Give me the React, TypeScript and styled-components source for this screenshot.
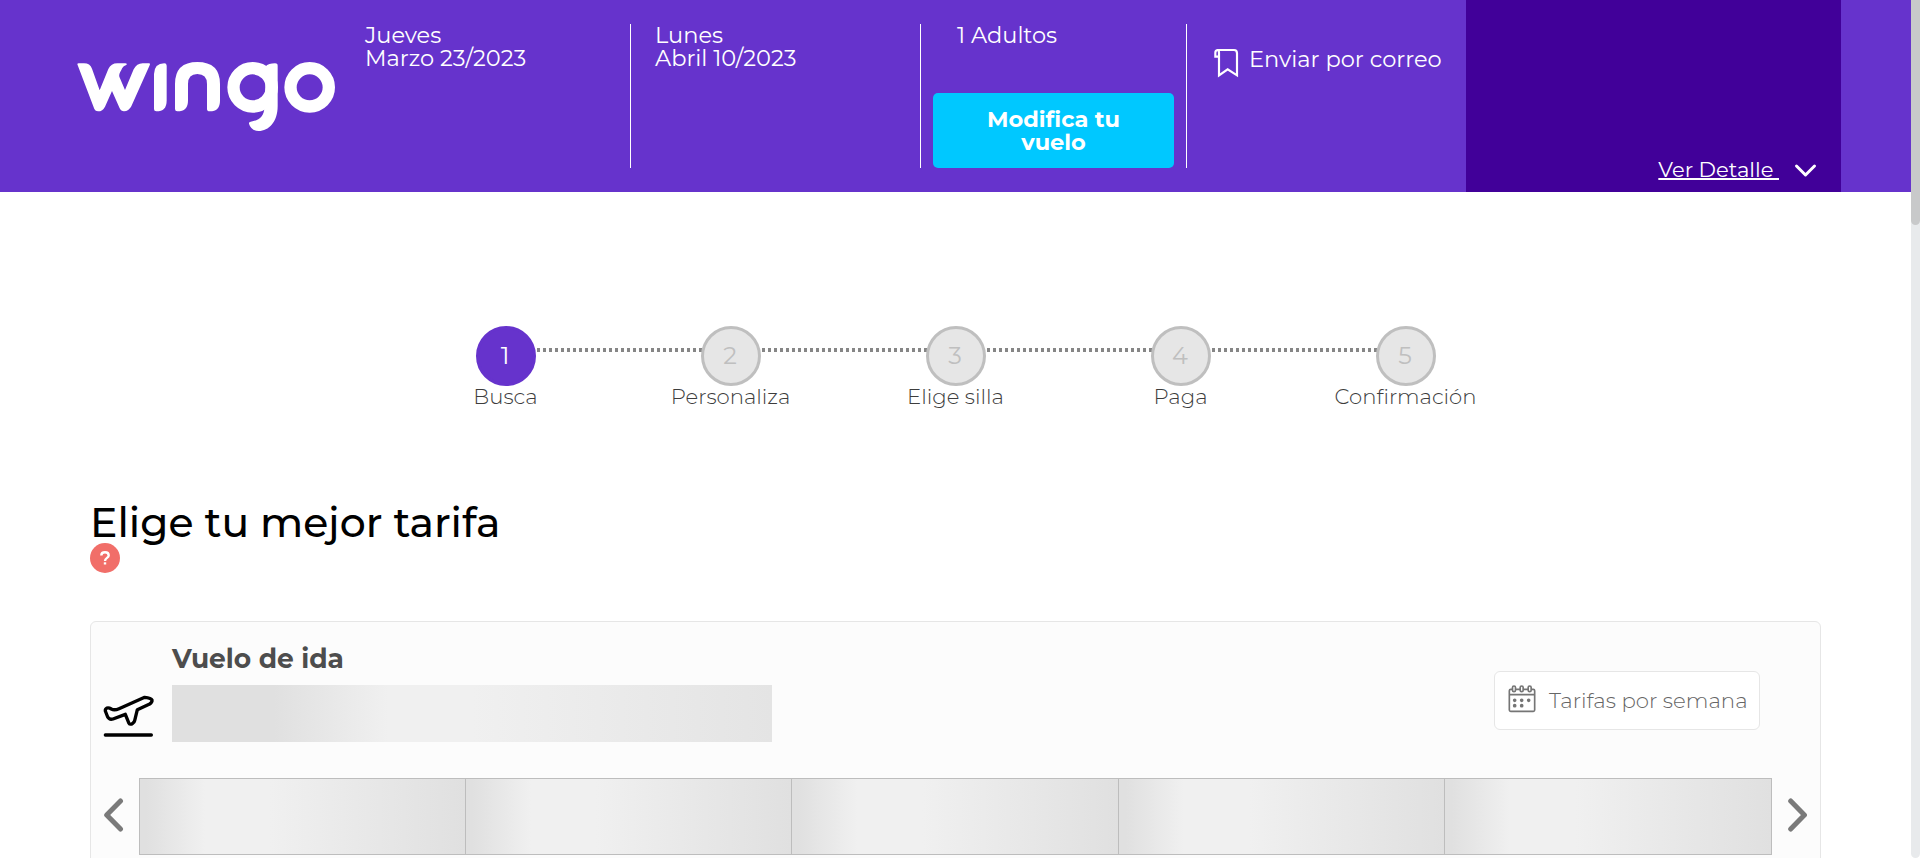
import React from "react";
import styled, { createGlobalStyle } from "styled-components";

const GlobalStyle = createGlobalStyle`
  *, *::before, *::after { box-sizing: border-box; }
  html, body { margin: 0; background: #fff; }
  body, button { font-family: Montserrat, Inter, sans-serif; }
  h1, h2, p { margin: 0; }
`;

const Viewport = styled.div`
  display: flex;
  height: 858px;
  overflow: hidden;
`;

const Page = styled.div`
  flex: 1;
  min-width: 0;
`;

const ScrollTrack = styled.div`
  width: 9px;
  height: 858px;
  border-radius: 0 0 5px 5px;
  background: #e8eaec;
`;

const ScrollThumb = styled.div`
  height: 225px;
  border-radius: 0 0 5px 5px;
  background: #c8c9ca;
`;

const Header = styled.header`
  display: flex;
  height: 192px;
  padding: 0 70px 0 77px;
  background: #6633cc;
  color: #fff;
  font-size: 22.5px;
  line-height: 23px;
`;

const Logo = styled.svg`
  flex: none;
  width: 259px;
  height: 71px;
  margin: 61px 5px 0 0;
`;

const TripCell = styled.div<{ $width: number }>`
  flex: none;
  width: ${(p) => p.$width}px;
  height: 144px;
  margin-top: 24px;
  border-right: 1px solid #fff;
`;

const TripDate = styled.p`
  padding-left: 24px;
`;

const Passengers = styled.p`
  padding-left: 36px;
`;

const ModifyButton = styled.button`
  display: block;
  width: 241px;
  height: 75px;
  margin: 46px 0 0 12px;
  padding: 0 48px;
  border: 0;
  border-radius: 5px;
  background: #00c8ff;
  color: #fff;
  font-size: 22.5px;
  font-weight: 700;
  line-height: 23px;
`;

const MailLink = styled.div`
  display: flex;
  flex: 1;
  align-items: flex-start;
  gap: 10px;
  padding: 48px 0 0 27px;
  white-space: nowrap;
`;

const BookmarkIcon = styled.svg`
  width: 25px;
  height: 30px;
`;

const Summary = styled.div`
  display: flex;
  flex: none;
  align-items: flex-end;
  justify-content: flex-end;
  gap: 15px;
  width: 375px;
  padding: 0 24px 12px 0;
  background: #410099;
`;

const DetailLink = styled.span`
  font-size: 21.1px;
  line-height: 21px;
  text-decoration: underline;
  text-decoration-thickness: 2px;
`;

const DetailChevron = styled.svg`
  width: 23px;
  height: 16px;
  margin-bottom: 1px;
`;

const Steps = styled.ol`
  display: flex;
  width: 1125px;
  margin: 134px 0 0 393px;
  padding: 0;
  list-style: none;
`;

const Step = styled.li`
  position: relative;
  display: flex;
  flex: 1;
  flex-direction: column;
  align-items: center;
  color: #3d3d3d;
  font-size: 21.2px;
  font-weight: 350;
  line-height: 21px;

  &:not(:last-child)::after {
    content: "";
    position: absolute;
    top: 22px;
    left: 50%;
    width: 100%;
    height: 4px;
    background: repeating-linear-gradient(to right, transparent 0 1px, #868686 1px 4px, transparent 4px 6px);
  }
`;

const StepNumber = styled.span<{ $active: boolean }>`
  z-index: 1;
  display: flex;
  align-items: center;
  justify-content: center;
  width: 60px;
  height: 60px;
  padding: 0 1px 1px 0;
  border: 3px solid ${(p) => (p.$active ? "#6633cc" : "#bfbfbf")};
  border-radius: 50%;
  background: ${(p) => (p.$active ? "#6633cc" : "#e6e6e6")};
  color: ${(p) => (p.$active ? "#fff" : "#bfbfbf")};
  font-size: 24px;
  font-weight: 400;
`;

const Title = styled.h1`
  margin: 95px 0 0 90px;
  color: #000;
  font-size: 40.9px;
  font-weight: 500;
  line-height: 41px;
`;

const Help = styled.svg`
  display: block;
  width: 30px;
  height: 30px;
  margin-left: 90px;
`;

const FareCard = styled.section`
  width: 1731px;
  height: 400px;
  margin: 48px 0 0 90px;
  border: 1px solid #e6e6e6;
  border-radius: 6px;
  background: #fcfcfc;
`;

const FareHead = styled.div`
  display: flex;
  align-items: flex-start;
  height: 156px;
  padding: 23px 60px 0 12px;
`;

const PlaneIcon = styled.svg`
  width: 52px;
  height: 44px;
  margin: 49px 17px 0 0;
`;

const FareInfo = styled.div`
  flex: 1;
`;

const FareTitle = styled.h2`
  color: #4d4d4d;
  font-size: 26.5px;
  font-weight: 700;
  line-height: 27px;
`;

const RouteSkeleton = styled.div`
  width: 600px;
  height: 57px;
  margin-top: 13px;
  background: linear-gradient(to right, #e0e0e0 17%, #f0f0f0 36%, #f0f0f0 50%, #e4e4e4 100%);
`;

const WeekButton = styled.button`
  display: flex;
  align-items: center;
  width: 266px;
  height: 59px;
  margin-top: 26px;
  padding: 0 0 0 13px;
  border: 1px solid #e6e6e6;
  border-radius: 6px;
  background: #fff;
  color: #666;
  font-size: 21.3px;
  font-weight: 350;
  line-height: 21px;
  white-space: nowrap;
`;

const CalendarIcon = styled.svg`
  flex: none;
  width: 28px;
  height: 28px;
  margin: -3px 13px 0 0;
`;

const Carousel = styled.div`
  display: flex;
  align-items: center;
  height: 77px;
`;

const Arrow = styled.button`
  display: flex;
  flex: none;
  justify-content: center;
  width: 48px;
  padding: 0 0 4px;
  border: 0;
  background: none;
`;

const ArrowIcon = styled.svg`
  width: 22px;
  height: 36px;
`;

const Days = styled.div`
  display: flex;
  flex: 1;
  height: 77px;
  border: 1px solid #bdbdbd;
  border-left: 0;
`;

const DaySkeleton = styled.div`
  flex: 0 0 326.2px;
  border-left: 1px solid #bdbdbd;
  background: linear-gradient(to right, #e0e0e0 2%, #f0f0f0 20%, #f0f0f0 40%, #e0e0e0 100%);

  &:last-child {
    flex: 1;
  }
`;

const steps = ["Busca", "Personaliza", "Elige silla", "Paga", "Confirmación"];
const dayCount = 5;

const WingoLogo = () => (
  <Logo viewBox="51 183 777 213" fill="#fff" aria-label="wingo">
    <path d="M52 193Q52 190 56 190H72Q90 190 96 206L119 271L145 207Q153 190 172 190H196Q203 190 199 195Q188 198 184 210Q176 222 178 230L195 270L221 208Q230 190 248 190H268Q272 191 269 196L214 319Q206 334 192 334Q183 334 179 325L156 273L135 320Q128 334 114 334Q106 334 103 327Z" />
    <path d="M282 222Q283 190 313 190Q320 190 320 197V302Q320 334 289 334Q282 334 282 327Z" />
    <path d="M345 327V252Q345 186 412 186Q480 186 480 252V302Q480 334 449 334Q441 334 441 327V252Q441 222 412 222Q384 222 384 252V302Q384 334 352 334Q345 334 345 327Z" />
    <circle cx="578" cy="262" r="57.5" fill="none" stroke="#fff" strokeWidth="37" />
    <path d="M616 200Q626 190 645 190Q653 190 653 197V318C653 366 626 393 596 393C580 393 570 382 567 371Q566 366 572 365C598 361 612 349 613 324L616 262Z" />
    <circle cx="749" cy="262" r="57.5" fill="none" stroke="#fff" strokeWidth="37" />
  </Logo>
);

export default function App() {
  return (
    <>
      <GlobalStyle />
      <Viewport>
        <Page>
          <Header>
            <WingoLogo />
            <TripCell $width={290}>
              <TripDate>Jueves</TripDate>
              <TripDate>Marzo 23/2023</TripDate>
            </TripCell>
            <TripCell $width={290}>
              <TripDate>Lunes</TripDate>
              <TripDate>Abril 10/2023</TripDate>
            </TripCell>
            <TripCell $width={266}>
              <Passengers>1 Adultos</Passengers>
              <ModifyButton>Modifica tu vuelo</ModifyButton>
            </TripCell>
            <MailLink>
              <BookmarkIcon viewBox="102 144 75 90" fill="none" stroke="#fff" strokeWidth="6.5">
                <path d="M118 170H106V158Q106 150 114 150H162Q171 150 171 160V226L143 208L117 226V158Q117 150 112 150" />
              </BookmarkIcon>
              <span>Enviar por correo</span>
            </MailLink>
            <Summary>
              <DetailLink>Ver Detalle&nbsp;</DetailLink>
              <DetailChevron viewBox="0 0 23 16" fill="none" stroke="#fff" strokeWidth="3" strokeLinecap="round" strokeLinejoin="round">
                <path d="M2.5 3L11.5 12L20.5 3" />
              </DetailChevron>
            </Summary>
          </Header>

          <Steps>
            {steps.map((label, i) => (
              <Step key={label}>
                <StepNumber $active={i === 0}>{i + 1}</StepNumber>
                {label}
              </Step>
            ))}
          </Steps>

          <Title>Elige tu mejor tarifa</Title>
          <Help viewBox="0 0 30 30" fill="none">
            <circle cx="15" cy="15" r="15" fill="#f16e69" />
            <path d="M11.3 12.4C11.3 8.2 18.7 8.2 18.7 12.4C18.7 15 15 14.8 15 18" stroke="#fff" strokeWidth="2.4" />
            <rect x="13.8" y="19.3" width="2.4" height="2.2" fill="#fff" />
          </Help>

          <FareCard>
            <FareHead>
              <PlaneIcon viewBox="24 42 156 132" fill="none" stroke="#000" strokeWidth="10" strokeLinecap="round" strokeLinejoin="round">
                <path d="M149 52L72 86Q58 92 49 87Q41 82 36 84Q30 87 31 93L38 111Q43 120 54 117L91 103L101 128Q105 136 113 130Q118 127 119 122L127 89L164 72Q172 67 171 60Q168 54 149 52Z" />
                <path d="M31 165H169" />
              </PlaneIcon>
              <FareInfo>
                <FareTitle>Vuelo de ida</FareTitle>
                <RouteSkeleton />
              </FareInfo>
              <WeekButton>
                <CalendarIcon viewBox="36 38 84 84" fill="none" stroke="#757575" strokeWidth="5">
                  <path d="M49 51H44Q40 51 40 55V113Q40 117 44 117H112Q116 117 116 113V55Q116 51 112 51H106M59 51H72M82 51H96M40 67H116" />
                  <rect x="49.5" y="41" width="9" height="17" rx="4.5" />
                  <rect x="72.5" y="41" width="9" height="17" rx="4.5" />
                  <rect x="96.5" y="41" width="9" height="17" rx="4.5" />
                  <path d="M56 84h.1M77 84h.1M98 84h.1M56 100h.1M77 100h.1" strokeWidth="11" strokeLinecap="round" />
                </CalendarIcon>
                Tarifas por semana
              </WeekButton>
            </FareHead>
            <Carousel>
              <Arrow aria-label="Anterior">
                <ArrowIcon viewBox="0 0 22 36" fill="none" stroke="#7a7a7a" strokeWidth="5" strokeLinecap="round" strokeLinejoin="round">
                  <path d="M16.5 4L2.700 18L16.5 32" />
                </ArrowIcon>
              </Arrow>
              <Days>
                {Array.from({ length: dayCount }, (_, i) => (
                  <DaySkeleton key={i} />
                ))}
              </Days>
              <Arrow aria-label="Siguiente">
                <ArrowIcon viewBox="0 0 22 36" fill="none" stroke="#7a7a7a" strokeWidth="5" strokeLinecap="round" strokeLinejoin="round">
                  <path d="M5.7 4L19.4 18L5.7 32" />
                </ArrowIcon>
              </Arrow>
            </Carousel>
          </FareCard>
        </Page>
        <ScrollTrack>
          <ScrollThumb />
        </ScrollTrack>
      </Viewport>
    </>
  );
}
